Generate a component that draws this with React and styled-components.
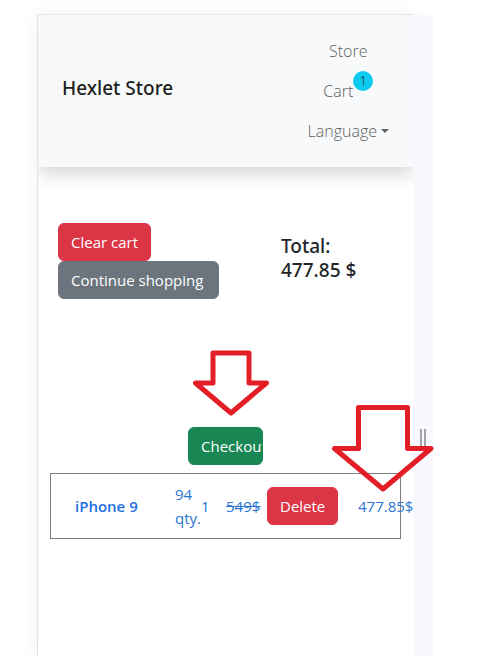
import React from "react";
import styled, { createGlobalStyle } from "styled-components";

const GlobalStyle = createGlobalStyle`
  *, *::before, *::after { box-sizing: border-box; }
  body {
    margin: 0;
    background: #fff;
    color: #212529;
    font-family: "Segoe UI", "Open Sans", "Noto Sans", sans-serif;
    font-size: 15px;
    line-height: 24px;
  }
`;

const Viewer = styled.div`
  display: flex;
  min-height: 100vh;
  padding: 14px 58px 0 37px;
  overflow: hidden;
`;

const Screen = styled.div`
  flex: 1;
  min-width: 0;
  border-top: 1px solid #e3e3e3;
  border-left: 1px solid #e3e3e3;
  background: #fff;
  box-shadow: 0 0 16px rgba(0, 0, 0, 0.06);
`;

const Gutter = styled.div`
  position: relative;
  flex: 0 0 20px;
  margin-top: 1px;
  padding-top: 414px;
  background: #f8f9fe;
`;

const Grip = styled.div`
  width: 6px;
  height: 20px;
  margin: 0 auto;
  border: solid #a3a4a6;
  border-width: 0 2px;
`;

const Navbar = styled.nav`
  display: flex;
  align-items: center;
  justify-content: space-between;
  padding: 16px 24px;
  background: #f8f9fb;
  box-shadow: 0 8px 16px rgba(0, 0, 0, 0.15);
  clip-path: inset(0 0 -32px 0);
`;

const Brand = styled.a`
  padding-bottom: 6px;
  color: #1d1f21;
  font-family: "Segoe UI", "Noto Sans", sans-serif;
  font-size: 19px;
  font-weight: 500;
  text-decoration: none;
`;

const NavLinks = styled.div`
  display: flex;
  flex-direction: column;
  align-items: center;
`;

const navItem = `
  position: relative;
  padding: 8px 0;
  border: 0;
  background: none;
  color: #5c5f61;
  font: inherit;
  font-size: 16px;
  font-weight: 300;
  text-decoration: none;
`;

const NavLink = styled.a`
  ${navItem}
  margin-right: ${(p) => (p.$badged ? "20px" : "0")};
`;

const NavMenu = styled.button`
  ${navItem}
  display: flex;
  align-items: center;
  gap: 4px;
`;

const Caret = styled.span`
  border: 4px solid transparent;
  border-top: 4px solid #5f6264;
  border-bottom: 0;
`;

const Badge = styled.span`
  position: absolute;
  top: 0;
  left: 100%;
  width: 20px;
  height: 20px;
  border-radius: 50%;
  background: #0dcaf0;
  color: #15515d;
  font-size: 12px;
  font-weight: 400;
  line-height: 20px;
  text-align: center;
`;

const Main = styled.main`
  padding: 56px 12px 0;
`;

const Summary = styled.div`
  display: grid;
  grid-template-columns: 223px 1fr;
  padding-left: 8px;
`;

const Actions = styled.div`
  display: flex;
  flex-direction: column;
  align-items: flex-start;
`;

const Total = styled.h1`
  max-width: 88px;
  margin: 11px 0 0;
  font-family: "Segoe UI", "Noto Sans", sans-serif;
  font-size: 19px;
  font-weight: 500;
  line-height: 24px;
`;

const tones = { danger: "#dc3545", secondary: "#6c757d", success: "#198754" };

const Button = styled.button`
  display: block;
  width: ${(p) => p.$width || "auto"};
  padding: 6px 12px;
  border: 1px solid ${(p) => tones[p.$tone]};
  border-radius: 6px;
  background: ${(p) => tones[p.$tone]};
  color: #fff;
  font: inherit;
  text-align: left;
  white-space: nowrap;
  overflow: hidden;
`;

const CheckoutSlot = styled.div`
  position: relative;
  width: 75px;
  margin: 128px auto 8px;
`;

const CartTable = styled.table`
  display: block;
  border: 1px solid #808080;
  color: #2b75d3;
`;

const TableBody = styled.tbody`
  display: block;
`;

const ProductRow = styled.tr`
  display: grid;
  grid-template-columns: 1fr 26px 25px 41px 91px 42px;
  align-items: center;
  min-height: 64px;
  padding-left: 24px;
`;

const Cell = styled.td`
  position: relative;
  padding: 0;
  white-space: nowrap;
`;

const Stock = styled(Cell)`
  white-space: normal;
`;

const ProductLink = styled.a`
  color: #1f6fe5;
  font-weight: 600;
  text-decoration: none;
`;

const Pointer = styled.svg`
  position: absolute;
  left: 50%;
  bottom: 100%;
  margin-left: ${(p) => p.$shift};
  margin-bottom: ${(p) => p.$gap};
  fill: none;
  stroke: #e31e26;
  stroke-width: 5;
  stroke-linejoin: round;
  pointer-events: none;
  z-index: 1;
`;

export default function App() {
  return (
    <>
      <GlobalStyle />
      <Viewer>
        <Screen>
          <Navbar>
            <Brand href="#">Hexlet Store</Brand>
            <NavLinks>
              <NavLink href="#store">Store</NavLink>
              <NavLink href="#cart" $badged>
                Cart<Badge>1</Badge>
              </NavLink>
              <NavMenu type="button">
                Language <Caret />
              </NavMenu>
            </NavLinks>
          </Navbar>
          <Main>
            <Summary>
              <Actions>
                <Button type="button" $tone="danger">Clear cart</Button>
                <Button type="button" $tone="secondary" $width="161px">Continue shopping</Button>
              </Actions>
              <Total>Total: 477.85 $</Total>
            </Summary>
            <CheckoutSlot>
              <Pointer $shift="-34px" $gap="11px" width="78" height="66" viewBox="0 0 78 66" aria-hidden="true">
                <path d="M21 3H57V33H74.500L39 63L3.500 33H21Z" />
              </Pointer>
              <Button type="button" $tone="success" $width="100%">Checkout</Button>
            </CheckoutSlot>
            <CartTable>
              <TableBody>
                <ProductRow>
                  <Cell><ProductLink href="#iphone-9">iPhone 9</ProductLink></Cell>
                  <Stock>94 qty.</Stock>
                  <Cell>1</Cell>
                  <Cell><s>549$</s></Cell>
                  <Cell><Button type="button" $tone="danger">Delete</Button></Cell>
                  <Cell>
                    477.85$
                    <Pointer $shift="-48px" $gap="2px" width="103" height="88" viewBox="0 0 103 88" aria-hidden="true">
                      <path d="M27.500 3.500H76.500V44.500H100L52 85L3.500 44.500H27.500Z" />
                    </Pointer>
                  </Cell>
                </ProductRow>
              </TableBody>
            </CartTable>
          </Main>
        </Screen>
        <Gutter><Grip /></Gutter>
      </Viewer>
    </>
  );
}
